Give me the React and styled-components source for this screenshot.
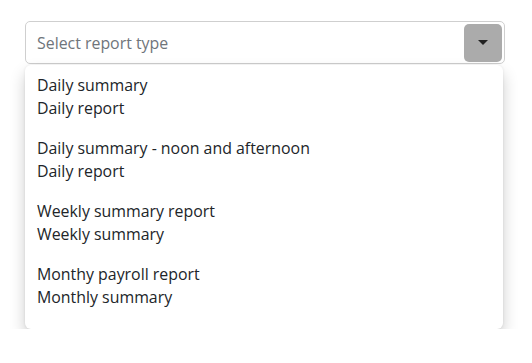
import React from "react";
import styled, { createGlobalStyle } from "styled-components";

const reports = [
  { name: "Daily summary", type: "Daily report" },
  { name: "Daily summary - noon and afternoon", type: "Daily report" },
  { name: "Weekly summary report", type: "Weekly summary" },
  { name: "Monthy payroll report", type: "Monthly summary" },
];

const GlobalStyle = createGlobalStyle`
  body {
    margin: 0;
    background: #ffffff;
    font-family: "Open Sans", "Noto Sans", sans-serif;
  }
`;

const Page = styled.div`
  padding: 21px 27px 0 25px;
  width: 480px;
`;

const Field = styled.div`
  display: flex;
  align-items: center;
  height: 43px;
  box-sizing: border-box;
  border: 1px solid #cfcfcf;
  border-radius: 5px;
  padding: 0 2px 0 11px;
  background: #fff;
`;

const Placeholder = styled.span`
  flex: 1;
  font-size: 15.9px;
  color: #6f757b;
`;

const Toggle = styled.button`
  width: 38px;
  height: 38px;
  border: none;
  border-radius: 5px;
  background: #ababab;
  display: flex;
  align-items: center;
  justify-content: center;
  padding: 0;
`;

const Menu = styled.ul`
  list-style: none;
  margin: 1px 2px 0 0;
  padding: 0 0 12px;
  background: #fff;
  border-radius: 6px;
  box-shadow: 0 8px 16px rgba(0, 0, 0, 0.2), 0 0 3px rgba(0, 0, 0, 0.08);
`;

const Option = styled.li`
  padding: 8.5px 12px;
  font-size: 15.9px;
  line-height: 23px;
  color: #212529;
`;

const Line = styled.div`
  white-space: nowrap;
`;

const App = () => (
  <>
    <GlobalStyle />
    <Page>
      <Field>
        <Placeholder>Select report type</Placeholder>
        <Toggle aria-label="Open">
          <svg width="10" height="5" viewBox="0 0 10 5">
            <path d="M0 0h10L5 5z" fill="#222" />
          </svg>
        </Toggle>
      </Field>
      <Menu>
        {reports.map((r) => (
          <Option key={r.name}>
            <Line>{r.name}</Line>
            <Line>{r.type}</Line>
          </Option>
        ))}
      </Menu>
    </Page>
  </>
);

export default App;
